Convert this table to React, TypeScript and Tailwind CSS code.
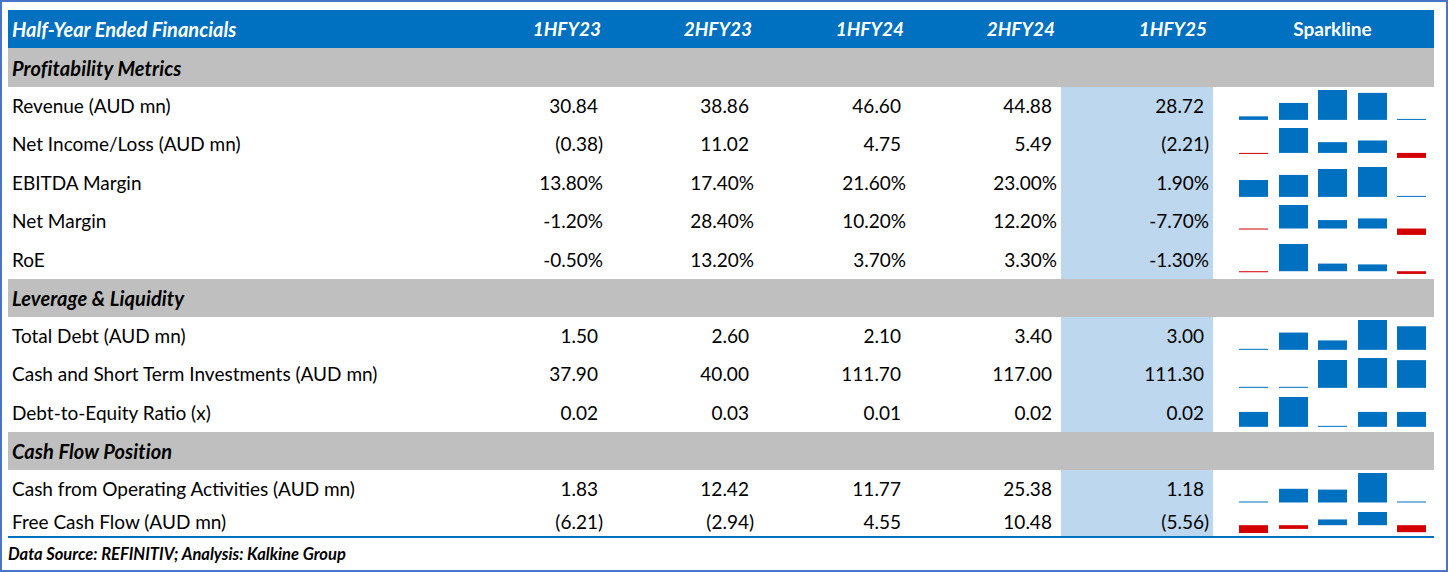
type Row = {
  label: string
  values: number[]
  pct?: boolean
  h: number
  top?: number
  bottom?: number
}

type Section = { title: string; h: string; rows: Row[] }

const sections: Section[] = [
  {
    title: "Profitability Metrics",
    h: "h-[39px]",
    rows: [
      { label: "Revenue (AUD mn)", values: [30.84, 38.86, 46.6, 44.88, 28.72], h: 38.4 },
      { label: "Net Income/Loss (AUD mn)", values: [-0.38, 11.02, 4.75, 5.49, -2.21], h: 38.4 },
      { label: "EBITDA Margin", values: [13.8, 17.4, 21.6, 23.0, 1.9], pct: true, h: 38.4 },
      { label: "Net Margin", values: [-1.2, 28.4, 10.2, 12.2, -7.7], pct: true, h: 38.4 },
      { label: "RoE", values: [-0.5, 13.2, 3.7, 3.3, -1.3], pct: true, h: 38.4 },
    ],
  },
  {
    title: "Leverage & Liquidity",
    h: "h-[38px]",
    rows: [
      { label: "Total Debt (AUD mn)", values: [1.5, 2.6, 2.1, 3.4, 3.0], h: 38.33 },
      { label: "Cash and Short Term Investments (AUD mn)", values: [37.9, 40.0, 111.7, 117.0, 111.3], h: 38.33 },
      { label: "Debt-to-Equity Ratio (x)", values: [0.02, 0.03, 0.01, 0.02, 0.02], h: 38.34 },
    ],
  },
  {
    title: "Cash Flow Position",
    h: "h-[38px]",
    rows: [
      { label: "Cash from Operating Activities (AUD mn)", values: [1.83, 12.42, 11.77, 25.38, 1.18], h: 38 },
      { label: "Free Cash Flow (AUD mn)", values: [-6.21, -2.94, 4.55, 10.48, -5.56], h: 27, top: 4, bottom: 2 },
    ],
  },
]

const periods = ["1HFY23", "2HFY23", "1HFY24", "2HFY24", "1HFY25"]

const grid = "grid grid-cols-[447px_152px_151px_152px_151px_152px_221px] items-center"

function formatValue(v: number, pct?: boolean) {
  if (pct) return <>{v.toFixed(2)}%</>
  if (v < 0) return <>({Math.abs(v).toFixed(2)})</>
  return (
    <>
      {v.toFixed(2)}
      <span className="invisible">)</span>
    </>
  )
}

function Sparkline({ values, h, top = 3, bottom = 5.5 }: { values: number[]; h: number; top?: number; bottom?: number }) {
  const H = h - top - bottom
  const min = Math.min(...values)
  const max = Math.max(...values)

  return (
    <svg width={221} height={h} className="block">
      {values.map((v, i) => {
        let y: number
        let bh: number
        if (min >= 0) {
          bh = Math.max(1, ((v - min) / (max - min)) * H)
          y = top + H - bh
        } else {
          const s = H / (max - min)
          const zero = top + max * s
          bh = Math.max(1, Math.abs(v) * s)
          y = v >= 0 ? zero - bh : zero
        }
        return (
          <rect
            key={i}
            x={Math.round(26 + i * 39.5)}
            y={y}
            width={29}
            height={bh}
            fill={v < 0 ? "#d40000" : "#0070c0"}
          />
        )
      })}
    </svg>
  )
}

export default function App() {
  return (
    <div className="h-[572px] w-[1448px] border-2 border-[#4a74c6] bg-white pl-[6px] pt-[8px] font-['Lato','Liberation_Sans',sans-serif] text-[19px] text-black">
      <div className="w-[1426px]">
        {/* Header */}
        <div className={`${grid} h-[38px] bg-[#0070c0] font-bold text-white`}>
          <div className="pl-[4px] text-[20px] italic">Half-Year Ended Financials</div>
          {periods.map((p) => (
            <div key={p} className="pr-[6px] text-right italic">
              {p}
            </div>
          ))}
          <div className="pl-[26px] pr-[8px] text-center">Sparkline</div>
        </div>

        {sections.map((section) => (
          <div key={section.title}>
            <div
              className={`flex ${section.h} items-center bg-[#bfbfbf] pl-[4px] text-[20px] font-bold italic tracking-[0.1px]`}
            >
              {section.title}
            </div>
            {section.rows.map((row) => (
              <div key={row.label} className={`${grid} items-stretch`}>
                <div className="flex items-center pl-[4px]">{row.label}</div>
                {row.values.map((v, i) => (
                  <div
                    key={i}
                    className={`flex items-center justify-end pr-[4px] ${i === 4 ? "bg-[#bdd7ee]" : ""}`}
                  >
                    {formatValue(v, row.pct)}
                  </div>
                ))}
                <Sparkline values={row.values} h={row.h} top={row.top} bottom={row.bottom} />
              </div>
            ))}
          </div>
        ))}

        <div className="h-[2px] bg-[#0070c0]" />

        {/* Footer */}
        <div className="flex h-[32px] items-center text-[16.5px] font-bold italic">
          Data Source: REFINITIV; Analysis: Kalkine Group
        </div>
      </div>
    </div>
  )
}
